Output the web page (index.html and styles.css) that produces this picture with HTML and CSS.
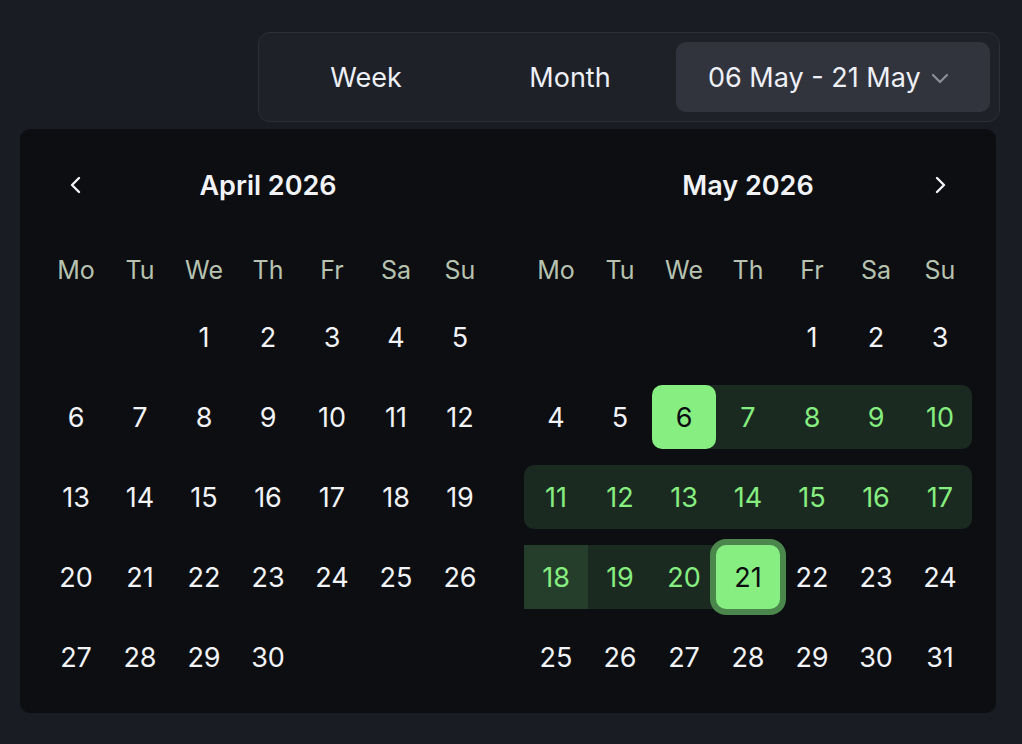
FILE: index.html
```html
<!DOCTYPE html>
<html lang="en">
<head>
<meta charset="utf-8">
<title>Date range picker</title>
<link rel="stylesheet" href="styles.css">
</head>
<body>
<div class="toolbar">
  <div class="segmented">
    <button class="tab tab-week">Week</button>
    <button class="tab tab-month">Month</button>
    <button class="tab tab-active">
      <span>06 May - 21 May</span>
      <svg class="caret" width="18" height="12" viewBox="0 0 18 12"><path d="M2 3 L9 10 L16 3" fill="none" stroke="#8b8e97" stroke-width="2.2" stroke-linecap="round" stroke-linejoin="round"/></svg>
    </button>
  </div>
</div>
<div class="panel">
  <div class="month">
    <div class="month-head">
      <button class="nav"><svg width="16" height="20" viewBox="0 0 16 20"><path d="M11 3 L4 10 L11 17" fill="none" stroke="#f2f3f7" stroke-width="2.4" stroke-linecap="round" stroke-linejoin="round"/></svg></button>
      <div class="month-title">April 2026</div>
      <div class="nav nav-empty"></div>
    </div>
    <div class="weekdays">
      <div>Mo</div><div>Tu</div><div>We</div><div>Th</div><div>Fr</div><div>Sa</div><div>Su</div>
    </div>
    <div class="days">
      <div class="day"></div><div class="day"></div>
      <div class="day"><span>1</span></div><div class="day"><span>2</span></div><div class="day"><span>3</span></div><div class="day"><span>4</span></div><div class="day"><span>5</span></div>
      <div class="day"><span>6</span></div><div class="day"><span>7</span></div><div class="day"><span>8</span></div><div class="day"><span>9</span></div><div class="day"><span>10</span></div><div class="day"><span>11</span></div><div class="day"><span>12</span></div>
      <div class="day"><span>13</span></div><div class="day"><span>14</span></div><div class="day"><span>15</span></div><div class="day"><span>16</span></div><div class="day"><span>17</span></div><div class="day"><span>18</span></div><div class="day"><span>19</span></div>
      <div class="day"><span>20</span></div><div class="day"><span>21</span></div><div class="day"><span>22</span></div><div class="day"><span>23</span></div><div class="day"><span>24</span></div><div class="day"><span>25</span></div><div class="day"><span>26</span></div>
      <div class="day"><span>27</span></div><div class="day"><span>28</span></div><div class="day"><span>29</span></div><div class="day"><span>30</span></div>
    </div>
  </div>
  <div class="month">
    <div class="month-head">
      <div class="nav nav-empty"></div>
      <div class="month-title">May 2026</div>
      <button class="nav"><svg width="16" height="20" viewBox="0 0 16 20"><path d="M5 3 L12 10 L5 17" fill="none" stroke="#f2f3f7" stroke-width="2.4" stroke-linecap="round" stroke-linejoin="round"/></svg></button>
    </div>
    <div class="weekdays">
      <div>Mo</div><div>Tu</div><div>We</div><div>Th</div><div>Fr</div><div>Sa</div><div>Su</div>
    </div>
    <div class="days">
      <div class="day"></div><div class="day"></div><div class="day"></div><div class="day"></div>
      <div class="day"><span>1</span></div><div class="day"><span>2</span></div><div class="day"><span>3</span></div>
      <div class="day"><span>4</span></div><div class="day"><span>5</span></div>
      <div class="day range-start"><span>6</span></div>
      <div class="day in-range"><span>7</span></div><div class="day in-range"><span>8</span></div><div class="day in-range"><span>9</span></div>
      <div class="day in-range row-end"><span>10</span></div>
      <div class="day in-range row-start"><span>11</span></div><div class="day in-range"><span>12</span></div><div class="day in-range"><span>13</span></div><div class="day in-range"><span>14</span></div><div class="day in-range"><span>15</span></div><div class="day in-range"><span>16</span></div>
      <div class="day in-range row-end"><span>17</span></div>
      <div class="day in-range hovered"><span>18</span></div><div class="day in-range"><span>19</span></div><div class="day in-range"><span>20</span></div>
      <div class="day range-end"><span>21</span></div>
      <div class="day"><span>22</span></div><div class="day"><span>23</span></div><div class="day"><span>24</span></div>
      <div class="day"><span>25</span></div><div class="day"><span>26</span></div><div class="day"><span>27</span></div><div class="day"><span>28</span></div><div class="day"><span>29</span></div><div class="day"><span>30</span></div><div class="day"><span>31</span></div>
    </div>
  </div>
</div>
</body>
</html>
```

FILE: styles.css
```css
* { box-sizing: border-box; }

html, body {
  margin: 0;
  padding: 0;
  background: #1a1c23;
  font-family: Inter, "Noto Sans", "DejaVu Sans", sans-serif;
  color: #f2f3f7;
}

body {
  width: 1022px;
  height: 744px;
  overflow: hidden;
}

.toolbar {
  display: flex;
  justify-content: flex-end;
  padding: 32px 22px 0 0;
}

.segmented {
  display: flex;
  gap: 4px;
  padding: 9px;
  background: #1f2129;
  border: 1px solid #2c2f38;
  border-radius: 12px;
}

.tab {
  height: 70px;
  width: 200px;
  border: none;
  background: transparent;
  color: #eef0f7;
  font-family: inherit;
  font-size: 27px;
  font-weight: 400;
  border-radius: 10px;
  display: flex;
  align-items: center;
  justify-content: center;
  padding: 0;
}

.tab-week { width: 196px; }
.tab-month { width: 204px; }

.tab-active {
  width: 314px;
  background: #32343d;
  justify-content: flex-start;
  padding-left: 32px;
  gap: 10px;
}

.caret { margin-top: 2px; }

.panel {
  margin: 7px 0 0 20px;
  width: 976px;
  height: 584px;
  background: #0c0e12;
  border-radius: 10px;
  padding: 24px;
  display: flex;
  gap: 32px;
}

.month {
  width: 448px;
}

.month-head {
  height: 64px;
  display: flex;
  align-items: center;
}

.nav {
  width: 64px;
  height: 64px;
  border: none;
  background: transparent;
  padding: 0;
  display: flex;
  align-items: center;
  justify-content: center;
}

.month-title {
  flex: 1;
  text-align: center;
  font-size: 27px;
  font-weight: 600;
  color: #f2f3f7;
}

.weekdays {
  margin-top: 33px;
  display: grid;
  grid-template-columns: repeat(7, 64px);
  height: 40px;
  align-items: center;
  text-align: center;
  font-size: 25px;
  color: #b7c3b0;
}

.days {
  margin-top: 15px;
  display: grid;
  grid-template-columns: repeat(7, 64px);
  grid-auto-rows: 64px;
  row-gap: 16px;
}

.day span {
  display: flex;
  width: 64px;
  height: 64px;
  align-items: center;
  justify-content: center;
  font-size: 27px;
  color: #f2f3f7;
}

.in-range { background: #1b2a20; }
.in-range span { color: #86ee80; }

.row-start { border-radius: 10px 0 0 10px; }
.row-end { border-radius: 0 10px 10px 0; }

.hovered { background: #253e2b; }

.range-start {
  background: linear-gradient(90deg, transparent 50%, #1b2a20 50%);
}

.range-end {
  background: linear-gradient(90deg, #1b2a20 50%, transparent 50%);
}

.range-start span,
.range-end span {
  background: #87ee81;
  color: #0b0d10;
  border-radius: 10px;
}

.range-end span {
  box-shadow: 0 0 0 6px #4b874d;
}
```
